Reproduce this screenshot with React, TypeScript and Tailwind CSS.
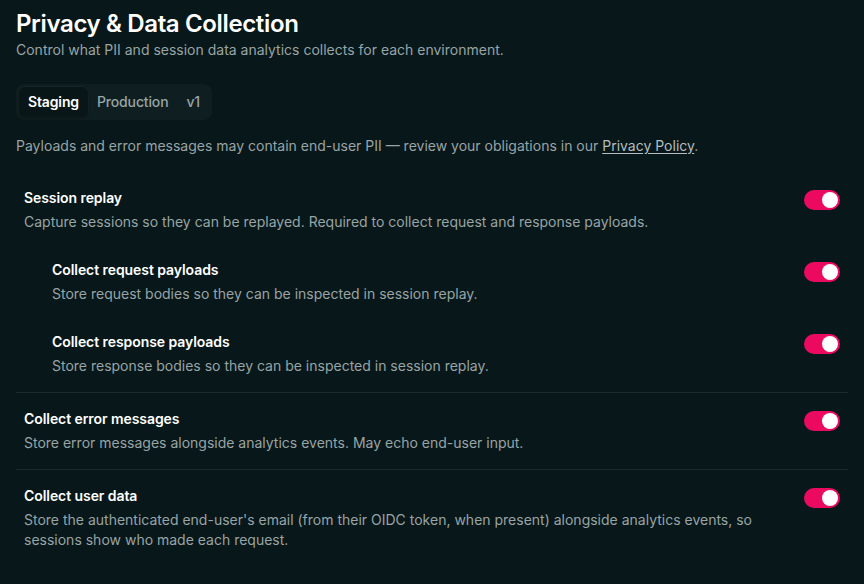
import React, { useState } from "react";

function Toggle({ on = true }: { on?: boolean }) {
  return (
    <button
      className={`relative inline-flex h-5 w-9 shrink-0 items-center rounded-full ${on ? "bg-[#eb0a60]" : "bg-[#2a3a3c]"}`}
    >
      <span
        className={`absolute top-[2px] h-4 w-4 rounded-full bg-white ${on ? "left-[18px]" : "left-[2px]"}`}
      />
    </button>
  );
}

function Row({ title, desc, nested = false }: { title: string; desc: string; nested?: boolean }) {
  return (
    <div className={`flex items-start gap-6 ${nested ? "pl-7" : ""}`}>
      <div className="flex-1 min-w-0">
        <div className="text-sm leading-5 font-semibold tracking-[-0.005em] text-white">{title}</div>
        <div className="mt-1 text-sm leading-5 text-[#98a4a5]">{desc}</div>
      </div>
      <div className="pt-0.5">
        <Toggle />
      </div>
    </div>
  );
}

export default function App() {
  const [tab, setTab] = useState("Staging");
  return (
    <div
      className="min-h-[584px] w-full bg-[#081719] px-4 pt-2 pb-8 text-white"
      style={{ fontFamily: "Inter, 'Noto Sans', sans-serif" }}
    >
      <h1 className="text-2xl leading-8 font-semibold tracking-[-0.015em] text-white">Privacy &amp; Data Collection</h1>
      <p className="text-sm leading-5 text-[#98a4a5]">
        Control what PII and session data analytics collects for each environment.
      </p>

      <div className="mt-6 inline-flex items-center rounded-lg bg-[#0f1f21] p-[3px]">
        {["Staging", "Production", "v1"].map((t) => (
          <button
            key={t}
            onClick={() => setTab(t)}
            className={`h-[30px] rounded-md px-[9px] text-sm font-medium tracking-[-0.01em] ${
              tab === t
                ? "bg-[#081618] text-white font-semibold shadow-[0_0_0_1px_rgba(255,255,255,0.03),0_1px_3px_rgba(0,0,0,0.5)]"
                : "text-[#98a4a5]"
            }`}
          >
            {t}
          </button>
        ))}
      </div>

      <p className="mt-4 text-sm leading-5 text-[#98a4a5]">
        Payloads and error messages may contain end-user PII — review your obligations in our{" "}
        <a className="underline underline-offset-2 text-[#b4bebf]" href="#">
          Privacy Policy
        </a>
        .
      </p>

      <div className="mt-4 flex flex-col divide-y divide-[#1a2b2d]">
        <div className="flex flex-col gap-7 px-2 py-4">
          <Row
            title="Session replay"
            desc="Capture sessions so they can be replayed. Required to collect request and response payloads."
          />
          <Row
            nested
            title="Collect request payloads"
            desc="Store request bodies so they can be inspected in session replay."
          />
          <Row
            nested
            title="Collect response payloads"
            desc="Store response bodies so they can be inspected in session replay."
          />
        </div>
        <div className="px-2 py-4">
          <Row
            title="Collect error messages"
            desc="Store error messages alongside analytics events. May echo end-user input."
          />
        </div>
        <div className="px-2 py-4">
          <Row
            title="Collect user data"
            desc="Store the authenticated end-user's email (from their OIDC token, when present) alongside analytics events, so sessions show who made each request."
          />
        </div>
      </div>
    </div>
  );
}
